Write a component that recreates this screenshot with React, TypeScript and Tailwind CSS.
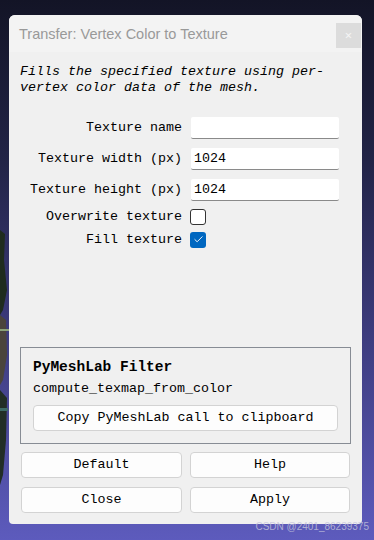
import { Check } from "lucide-react";

const mono = "font-['Liberation_Mono','DejaVu_Sans_Mono',monospace] text-[13.33px] text-black";

function FieldRow({ label, value }: { label: string; value: string }) {
  return (
    <div className="flex h-[22px] items-center">
      <div className={`${mono} w-[162px] whitespace-nowrap text-right`}>{label}</div>
      <input
        readOnly
        value={value}
        className={`${mono} ml-[9px] h-[22px] w-[148px] rounded-[2px] border-b border-b-[#8a8a8a] bg-white px-[3px] outline-none`}
      />
    </div>
  );
}

function CheckRow({ label, checked }: { label: string; checked: boolean }) {
  return (
    <div className="flex h-[23px] items-center">
      <div className={`${mono} w-[162px] whitespace-nowrap text-right`}>{label}</div>
      <div
        className={`ml-[8px] flex h-[16px] w-[16px] items-center justify-center rounded-[3px] ${
          checked ? "bg-[#0067c0]" : "border border-[#333333] bg-white"
        }`}
      >
        {checked && <Check className="h-[11px] w-[11px] text-white" strokeWidth={2} />}
      </div>
    </div>
  );
}

function Btn({ label, className }: { label: string; className: string }) {
  return (
    <button
      className={`${mono} flex h-[26px] items-center justify-center rounded-[4px] border border-[#d3d3d3] bg-[#fdfdfd] ${className}`}
    >
      {label}
    </button>
  );
}

export default function App() {
  return (
    <div className="relative h-[540px] w-[374px] overflow-hidden bg-[linear-gradient(180deg,#131426_0%,#222447_30%,#3b3a7a_60%,#5d5bbd_100%)] pl-[9px] pt-[15px]">
      {/* scene behind the dialog */}
      <svg className="absolute left-0 top-[220px]" width="9" height="280" viewBox="0 0 9 280">
        <path d="M0 10 L5 14 L4 40 L7 70 L3 90 L0 95 Z" fill="#1f2c1e" />
        <path d="M0 95 L6 100 L7 135 L3 160 L0 165 Z" fill="#4a443c" />
        <rect x="0" y="109" width="9" height="2" fill="#8aa27a" />
        <path d="M0 170 L7 178 L6 220 L3 255 L0 265 Z" fill="#222e26" />
        <rect x="0" y="188" width="8" height="3" fill="#3d6a66" />
      </svg>

      <div className="flex h-[509px] w-[353px] flex-col overflow-hidden rounded-t-[6px] rounded-b-[4px] bg-[#f0f0f0]">
        {/* title bar */}
        <div className="flex h-[37px] items-start bg-[#f3f3f3]">
          <div className="ml-[10px] mt-[9px] font-['Liberation_Sans',Arial,sans-serif] text-[14.5px] text-[#999999]">
            Transfer: Vertex Color to Texture
          </div>
          <div className="ml-auto mr-[1px] mt-[8px] flex h-[25px] w-[25px] items-center justify-center bg-[#dcdcdc] text-[13px] leading-none text-[#f4f4f4]">
            ×
          </div>
        </div>

        <div className="flex flex-1 flex-col px-[11px] pt-[12px]">
          <p className={`${mono} italic leading-[16px]`}>
            Fills the specified texture using per-
            <br />
            vertex color data of the mesh.
          </p>

          <div className="mt-[21px] flex flex-col">
            <FieldRow label="Texture name" value="" />
            <div className="h-[9px]" />
            <FieldRow label="Texture width (px)" value="1024" />
            <div className="h-[9px]" />
            <FieldRow label="Texture height (px)" value="1024" />
            <div className="h-[4px]" />
            <CheckRow label="Overwrite texture" checked={false} />
            <CheckRow label="Fill texture" checked={true} />
          </div>

          <div className="mt-auto flex h-[97px] flex-col border border-[#878c94] px-[12px] pt-[10px]">
            <div className={`${mono} text-[14.5px] font-bold leading-[18px]`}>PyMeshLab Filter</div>
            <div className={`${mono} mt-[5px] leading-[16px]`}>compute_texmap_from_color</div>
            <Btn label="Copy PyMeshLab call to clipboard" className="mt-[8px] w-[305px]" />
          </div>

          <div className="mt-[8px] grid grid-cols-2 gap-x-[8px] gap-y-[9px] pb-[11px] pl-[1px]">
            <Btn label="Default" className="w-[161px]" />
            <Btn label="Help" className="w-[160px]" />
            <Btn label="Close" className="w-[161px]" />
            <Btn label="Apply" className="w-[160px]" />
          </div>
        </div>
      </div>

      <div className="absolute right-[5px] top-[520px] whitespace-nowrap font-['Liberation_Sans',Arial,sans-serif] text-[10px] leading-[14px] text-[#c4c4dc]/80">
        CSDN @2401_86239375
      </div>
    </div>
  );
}
